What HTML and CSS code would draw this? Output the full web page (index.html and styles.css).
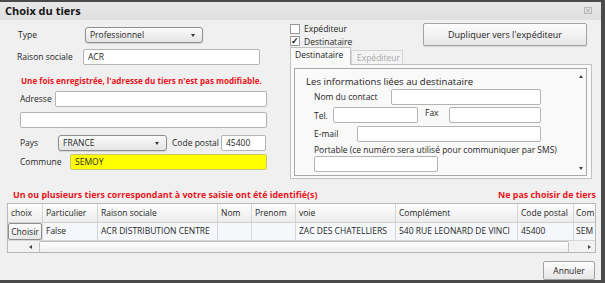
FILE: index.html
```html
<!DOCTYPE html>
<html>
<head>
    <title>Choix du tiers</title>
    <link rel="stylesheet" href="styles.css">
</head>
<body>
    <div class="window">
        <div class="titlebar">
            <span class="title">Choix du tiers</span>
            <svg class="close" width="8" height="7" viewBox="0 0 8 7">
                <rect x="0.5" y="0.5" width="7" height="6" fill="none" stroke="#b8b8b8"/>
                <path d="M2 1.5 L6 5.5 M6 1.5 L2 5.5" stroke="#a8a8a8"/>
            </svg>
        </div>

        <div class="main">
            <div class="left">
                <div class="row r-type">
                    <span class="lbl w-type">Type</span>
                    <div class="select sel-type">Professionnel<span class="arrow"></span></div>
                </div>
                <div class="row r-raison">
                    <span class="lbl w-raison">Raison sociale</span>
                    <div class="input in-raison">ACR</div>
                </div>
                <div class="warn">Une fois enregistrée, l'adresse du tiers n'est pas modifiable.</div>
                <div class="row r-adresse">
                    <span class="lbl w-adresse">Adresse</span>
                    <div class="input in-adresse"></div>
                </div>
                <div class="row r-blank">
                    <div class="input in-blank"></div>
                </div>
                <div class="row r-pays">
                    <span class="lbl w-pays">Pays</span>
                    <div class="select sel-pays">FRANCE<span class="arrow"></span></div>
                    <span class="lbl w-cp">Code postal</span>
                    <div class="input in-cp">45400</div>
                </div>
                <div class="row r-commune">
                    <span class="lbl w-commune">Commune</span>
                    <div class="input in-commune">SEMOY</div>
                </div>
            </div>

            <div class="right">
                <div class="top">
                    <div class="checks">
                        <div class="check"><span class="box"></span>Expéditeur</div>
                        <div class="check"><span class="box checked">✓</span>Destinataire</div>
                    </div>
                    <div class="btn btn-dup">Dupliquer vers l'expéditeur</div>
                </div>
                <div class="tabs">
                    <div class="tab active">Destinataire</div>
                    <div class="tab">Expéditeur</div>
                </div>
                <div class="panel">
                    <div class="scrollbox">
                        <div class="info">
                            <div class="info-title">Les informations liées au destinataire</div>
                            <div class="row r-nom">
                                <span class="lbl w-nom">Nom du contact</span>
                                <div class="input in-nom"></div>
                            </div>
                            <div class="row r-tel">
                                <span class="lbl w-tel">Tel.</span>
                                <div class="input in-tel"></div>
                                <span class="lbl w-fax">Fax</span>
                                <div class="input in-fax"></div>
                            </div>
                            <div class="row r-mail">
                                <span class="lbl w-mail">E-mail</span>
                                <div class="input in-mail"></div>
                            </div>
                            <div class="portable">Portable (ce numéro sera utilisé pour communiquer par SMS)</div>
                            <div class="row">
                                <div class="input in-port"></div>
                            </div>
                        </div>
                        <div class="vscroll">
                            <span class="tri up"></span>
                            <span class="tri down"></span>
                        </div>
                    </div>
                </div>
            </div>
        </div>

        <div class="messages">
            <span>Un ou plusieurs tiers correspondant à votre saisie ont été identifié(s)</span>
            <span>Ne pas choisir de tiers</span>
        </div>

        <div class="grid">
            <div class="grid-row head">
                <div class="cell">choix</div>
                <div class="cell">Particulier</div>
                <div class="cell">Raison sociale</div>
                <div class="cell">Nom</div>
                <div class="cell">Prenom</div>
                <div class="cell">voie</div>
                <div class="cell">Complément</div>
                <div class="cell">Code postal</div>
                <div class="cell">Com</div>
            </div>
            <div class="grid-row data">
                <div class="cell btn-cell"><div class="btn btn-choisir">Choisir</div></div>
                <div class="cell">False</div>
                <div class="cell">ACR DISTRIBUTION CENTRE</div>
                <div class="cell"></div>
                <div class="cell"></div>
                <div class="cell">ZAC DES CHATELLIERS</div>
                <div class="cell">540 RUE LEONARD DE VINCI</div>
                <div class="cell">45400</div>
                <div class="cell">SEM</div>
            </div>
            <div class="hscroll">
                <span class="tri left"></span>
                <span class="thumb"></span>
                <span class="tri right"></span>
            </div>
        </div>

        <div class="footer">
            <div class="btn btn-annuler">Annuler</div>
        </div>
    </div>
</body>
</html>
```

FILE: styles.css
```css
body {
    margin: 0;
    background: #4a4a4a;
    font-family: "Open Sans", sans-serif;
    font-size: 8.5px;
    color: #262626;
}

.window {
    width: 601px;
    height: 278px;
    margin-top: 2px;
    background: #f0f0f0;
    display: flex;
    flex-direction: column;
    overflow: hidden;
}

.titlebar {
    height: 18px;
    background: linear-gradient(#e8e8e8, #dfdfdf);
    display: flex;
    align-items: center;
    justify-content: space-between;
    padding: 0 9px 0 5px;
}
.title { font-weight: bold; font-size: 11px; color: #151515; }

.main { display: flex; height: 159px; }

/* left column */
.left { width: 290px; padding-left: 17px; box-sizing: border-box; }

.row { display: flex; align-items: center; height: 16px; }
.lbl { flex: none; white-space: nowrap; }

.input {
    box-sizing: border-box;
    height: 16px;
    border: 1px solid #b4b4b4;
    border-radius: 2px;
    background: #fff;
    padding-left: 4px;
    line-height: 14px;
}
.select {
    box-sizing: border-box;
    height: 16px;
    border: 1px solid #8e8e8e;
    border-radius: 3px;
    background: linear-gradient(#fbfbfb, #e4e4e4);
    box-shadow: 0 1px 1px rgba(0, 0, 0, 0.12);
    padding-left: 4px;
    line-height: 14px;
    position: relative;
}
.arrow {
    position: absolute;
    right: 7px;
    top: 6px;
    border-left: 2.5px solid transparent;
    border-right: 2.5px solid transparent;
    border-top: 3px solid #333;
}

.r-type { margin-top: 7px; padding-left: 1px; }
.w-type { width: 67px; }
.sel-type { width: 118px; }

.r-raison { margin-top: 6px; }
.w-raison { width: 66px; }
.in-raison { width: 177px; }

.warn {
    margin-top: 9px;
    padding-left: 4px;
    line-height: 14px;
    font-size: 8.1px;
    color: #e8141c;
    font-weight: bold;
    white-space: nowrap;
}

.r-adresse { margin-top: 3px; padding-left: 3px; }
.w-adresse { width: 35px; }
.in-adresse { width: 212px; }

.r-blank { margin-top: 5px; padding-left: 3px; }
.in-blank { width: 247px; }

.r-pays { margin-top: 7px; padding-left: 3px; }
.w-pays { width: 38px; }
.sel-pays { width: 109px; }
.w-cp { width: 49px; margin-left: 5px; }
.in-cp { width: 45px; }

.r-commune { margin-top: 3px; padding-left: 3px; }
.w-commune { width: 50px; }
.in-commune { width: 197px; background: #ffff00; border-color: #c8c870; }

/* right column */
.right { width: 302px; }

.top { display: flex; }
.checks { margin-top: 3px; }
.check { display: flex; align-items: center; height: 12.5px; }
.box {
    box-sizing: border-box;
    width: 10px;
    height: 10px;
    border: 1px solid #9a9a9a;
    background: #fff;
    margin-right: 4px;
    font-size: 9px;
    line-height: 8px;
    text-align: center;
    color: #111;
}
.box.checked { font-weight: bold; }

.btn {
    box-sizing: border-box;
    border: 1px solid #a3a3a3;
    border-radius: 2px;
    background: linear-gradient(#fdfdfd, #e6e6e6);
    box-shadow: 0 1px 1px rgba(0, 0, 0, 0.1);
    text-align: center;
}
.btn-dup {
    margin: 3px 5px 0 auto;
    width: 164px;
    height: 23px;
    line-height: 21px;
    font-size: 9px;
}

.tabs { display: flex; align-items: flex-end; height: 17px; margin-top: -1px; }
.tab {
    box-sizing: border-box;
    height: 14px;
    width: 52px;
    border: 1px solid #d4d4d4;
    border-bottom: none;
    background: #f3f3f3;
    color: #a9a9a9;
    padding-left: 5px;
    line-height: 13px;
}
.tab.active {
    height: 18px;
    width: 61px;
    margin-bottom: -1px;
    border-color: #c2c2c2;
    background: #f9f9f9;
    color: #222;
    padding-left: 4px;
    line-height: 13px;
    position: relative;
}

.panel {
    box-sizing: border-box;
    height: 115px;
    border: 1px solid #c2c2c2;
    background: #f9f9f9;
    padding: 3px 4px 2px 3px;
}
.scrollbox {
    box-sizing: border-box;
    height: 108px;
    border: 1px solid #a8a8a8;
    background: #f9f9f9;
    display: flex;
}
.info { flex: 1; padding-left: 19px; }
.info-title {
    margin: 6px 0 0 -8px;
    line-height: 14px;
    font-size: 9.6px;
    color: #222;
}
.w-nom { width: 77px; }
.in-nom { width: 150px; }
.r-tel { margin-top: 2px; align-items: flex-start; }
.r-tel .lbl { line-height: 17px; }
.w-tel { width: 19px; }
.in-tel { width: 85px; }
.w-fax { width: 24px; margin-left: 7px; line-height: 12px !important; }
.in-fax { width: 92px; }
.r-mail { margin-top: 3px; }
.w-mail { width: 43px; }
.in-mail { width: 184px; }
.portable { margin-top: 2px; line-height: 12px; white-space: nowrap; }
.in-port { width: 124px; }

.vscroll {
    width: 10px;
    display: flex;
    flex-direction: column;
    justify-content: space-between;
    align-items: center;
    padding: 6px 0 5px;
}
.tri { width: 0; height: 0; display: block; }
.tri.up { border-left: 2px solid transparent; border-right: 2px solid transparent; border-bottom: 3px solid #444; }
.tri.down { border-left: 2px solid transparent; border-right: 2px solid transparent; border-top: 3px solid #444; }
.tri.left { border-top: 2px solid transparent; border-bottom: 2px solid transparent; border-right: 3px solid #444; }
.tri.right { border-top: 2px solid transparent; border-bottom: 2px solid transparent; border-left: 3px solid #444; }

/* results */
.messages {
    display: flex;
    justify-content: space-between;
    margin-top: 10px;
    padding: 0 5px 0 13px;
    line-height: 12px;
    font-size: 8.9px;
    color: #e8141c;
    font-weight: bold;
    white-space: nowrap;
}

.grid {
    margin: 2px 0 0 7px;
    width: 589px;
    box-sizing: border-box;
    border: 1px solid #b8b8b8;
    background: #fff;
    overflow: hidden;
}
.grid-row {
    display: grid;
    grid-template-columns: 35px 55px 120px 34px 44px 100px 122px 56px 21px;
    white-space: nowrap;
}
.cell {
    box-sizing: border-box;
    border-right: 1px solid #d6d6d6;
    padding-left: 3px;
    overflow: hidden;
}
.grid-row .cell:last-child { border-right: none; padding-left: 2px; }
.head { height: 18px; line-height: 17px; background: linear-gradient(#fdfdfd, #ededed); border-bottom: 1px solid #d0d0d0; }
.data { height: 17px; line-height: 16px; background: #f5f7fa; border-bottom: 1px solid #d6d6d6; }
.btn-cell { padding: 0; }
.btn-choisir { height: 17px; line-height: 15px; border-color: #8f8f8f; }

.hscroll {
    height: 12px;
    display: flex;
    align-items: center;
    background: #f2f2f2;
}
.tri.left { margin: 0 7px 0 4px; }
.thumb {
    box-sizing: border-box;
    width: 530px;
    height: 12px;
    border: 1px solid #c0c0c0;
    border-radius: 2px;
    background: linear-gradient(#ffffff, #eeeeee);
}
.tri.right { margin-left: auto; margin-right: 4px; }

.footer { display: flex; justify-content: flex-end; padding-right: 6px; margin-top: 8px; }
.btn-annuler { width: 52px; height: 19px; line-height: 17px; }
```
